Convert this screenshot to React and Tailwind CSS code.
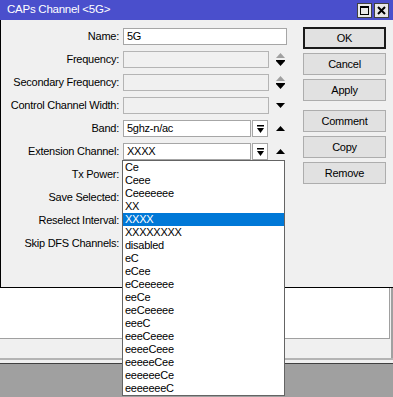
import React from "react";

const font = { fontFamily: '"Liberation Sans", Arial, sans-serif' };

function UpTri({ color = "#000" }) {
  return (
    <svg width="9" height="5" viewBox="0 0 9 5" className="block">
      <polygon points="0,5 9,5 4.5,0" fill={color} />
    </svg>
  );
}
function DownTri({ color = "#000" }) {
  return (
    <svg width="9" height="5" viewBox="0 0 9 5" className="block">
      <polygon points="0,0 9,0 4.5,5" fill={color} />
    </svg>
  );
}

function Spinner() {
  return (
    <div className="ml-[7px] flex flex-col items-center gap-[2px]">
      <UpTri color="#a0a0a0" />
      <svg width="9" height="6" viewBox="0 0 9 6" className="block">
        <rect x="0" y="0" width="9" height="1" fill="#000" />
        <polygon points="0,1 9,1 4.5,6" fill="#000" />
      </svg>
    </div>
  );
}

function DropBtn() {
  return (
    <div className="ml-px flex h-[17px] w-[16px] items-center justify-center border border-[#a6a6a6] bg-white">
      <svg width="7" height="8" viewBox="0 0 7 8" className="block">
        <rect x="0" y="0" width="7" height="1.5" fill="#000" />
        <polygon points="0,3 7,3 3.5,8" fill="#000" />
      </svg>
    </div>
  );
}

function Row({ label, children }) {
  return (
    <div className="flex h-[17px] items-center">
      <div className="w-[118px] text-right text-black">{label}</div>
      <div className="ml-[4px] flex items-center">{children}</div>
    </div>
  );
}

function Btn({ children, primary }) {
  return (
    <div
      className={
        "flex h-[22px] w-[83px] items-center justify-center bg-[#e1e1e1] text-black " +
        (primary ? "border-2 border-[#1a1a1a]" : "border border-[#adadad]")
      }
    >
      {children}
    </div>
  );
}

const items = [
  "Ce",
  "Ceee",
  "Ceeeeeee",
  "XX",
  "XXXX",
  "XXXXXXXX",
  "disabled",
  "eC",
  "eCee",
  "eCeeeeee",
  "eeCe",
  "eeCeeeee",
  "eeeC",
  "eeeCeeee",
  "eeeeCeee",
  "eeeeeCee",
  "eeeeeeCe",
  "eeeeeeeC",
];

export default function App() {
  return (
    <div
      className="relative h-[397px] w-[393px] overflow-hidden bg-[#a0a0a0] text-[11px] tracking-[-0.25px]"
      style={font}
    >
      {/* Dialog */}
      <div className="flex h-[288px] flex-col border-b border-black bg-[#f0f0f0]">
        <div className="flex h-[20px] items-center bg-[#4a4fcc] pl-[7px] pr-[4px]">
          <div className="flex-1 text-[11.5px] text-white">CAPs Channel &lt;5G&gt;</div>
          <div className="flex gap-[2px]">
            <div className="flex h-[15px] w-[15px] items-center justify-center border border-[#404040] bg-[#e8e8e8]">
              <svg width="9" height="9" viewBox="0 0 9 9" className="block">
                <rect x="0.5" y="0.5" width="8" height="8" fill="none" stroke="#000" strokeWidth="1" />
                <rect x="0" y="0" width="9" height="2" fill="#000" />
              </svg>
            </div>
            <div className="flex h-[15px] w-[15px] items-center justify-center border border-[#404040] bg-[#e8e8e8]">
              <svg width="9" height="9" viewBox="0 0 9 9" className="block">
                <path d="M1 1 L8 8 M8 1 L1 8" stroke="#000" strokeWidth="2" />
              </svg>
            </div>
          </div>
        </div>
        <div className="flex flex-1 border-l border-black">
          <div className="flex w-[302px] flex-col gap-[6px] pt-[8px]">
            <Row label="Name:">
              <div className="flex h-[17px] w-[164px] items-center border border-[#a6a6a6] bg-white pl-[3px]">5G</div>
            </Row>
            <Row label="Frequency:">
              <div className="h-[17px] w-[146px] border border-[#b4b4b4] bg-[#f0f0f0]" />
              <Spinner />
            </Row>
            <Row label="Secondary Frequency:">
              <div className="h-[17px] w-[146px] border border-[#b4b4b4] bg-[#f0f0f0]" />
              <Spinner />
            </Row>
            <Row label="Control Channel Width:">
              <div className="h-[17px] w-[146px] border border-[#b4b4b4] bg-[#f0f0f0]" />
              <div className="ml-[7px]">
                <DownTri />
              </div>
            </Row>
            <Row label="Band:">
              <div className="flex h-[17px] w-[128px] items-center border border-[#a6a6a6] bg-white pl-[3px]">5ghz-n/ac</div>
              <DropBtn />
              <div className="ml-[8px]">
                <UpTri />
              </div>
            </Row>
            <Row label="Extension Channel:">
              <div className="flex h-[17px] w-[128px] items-center border border-[#a6a6a6] bg-white pl-[3px]">XXXX</div>
              <DropBtn />
              <div className="ml-[8px]">
                <UpTri />
              </div>
            </Row>
            <Row label="Tx Power:" />
            <Row label="Save Selected:" />
            <Row label="Reselect Interval:" />
            <Row label="Skip DFS Channels:" />
          </div>
          <div className="flex flex-col pt-[7px]">
            <div className="flex flex-col gap-[4px]">
              <Btn primary>OK</Btn>
              <Btn>Cancel</Btn>
              <Btn>Apply</Btn>
            </div>
            <div className="mt-[9px] flex flex-col gap-[4px]">
              <Btn>Comment</Btn>
              <Btn>Copy</Btn>
              <Btn>Remove</Btn>
            </div>
          </div>
        </div>
      </div>

      {/* Parent window below */}
      <div className="w-[392px] border-r border-[#a0a0a0] bg-[#f0f0f0]">
        <div className="h-[51px] w-[390px] border-b border-r border-[#a0a0a0] bg-white" />
        <div className="h-[19px]" />
      </div>
      <div className="h-[2px] w-[393px] bg-[#b4b4b4]" />
      <div className="h-[3px] w-[393px] bg-[#f0f0f0]" />
      <div className="h-px w-[393px] bg-[#404040]" />

      {/* Dropdown list */}
      <div className="absolute left-[122px] top-[160px] w-[163px] border border-[#646464] bg-white">
        {items.map((it) => (
          <div
            key={it}
            className={
              "h-[13px] pl-[2px] leading-[13px] " +
              (it === "XXXX" ? "bg-[#0078d7] text-white" : "text-black")
            }
          >
            {it}
          </div>
        ))}
      </div>
    </div>
  );
}
